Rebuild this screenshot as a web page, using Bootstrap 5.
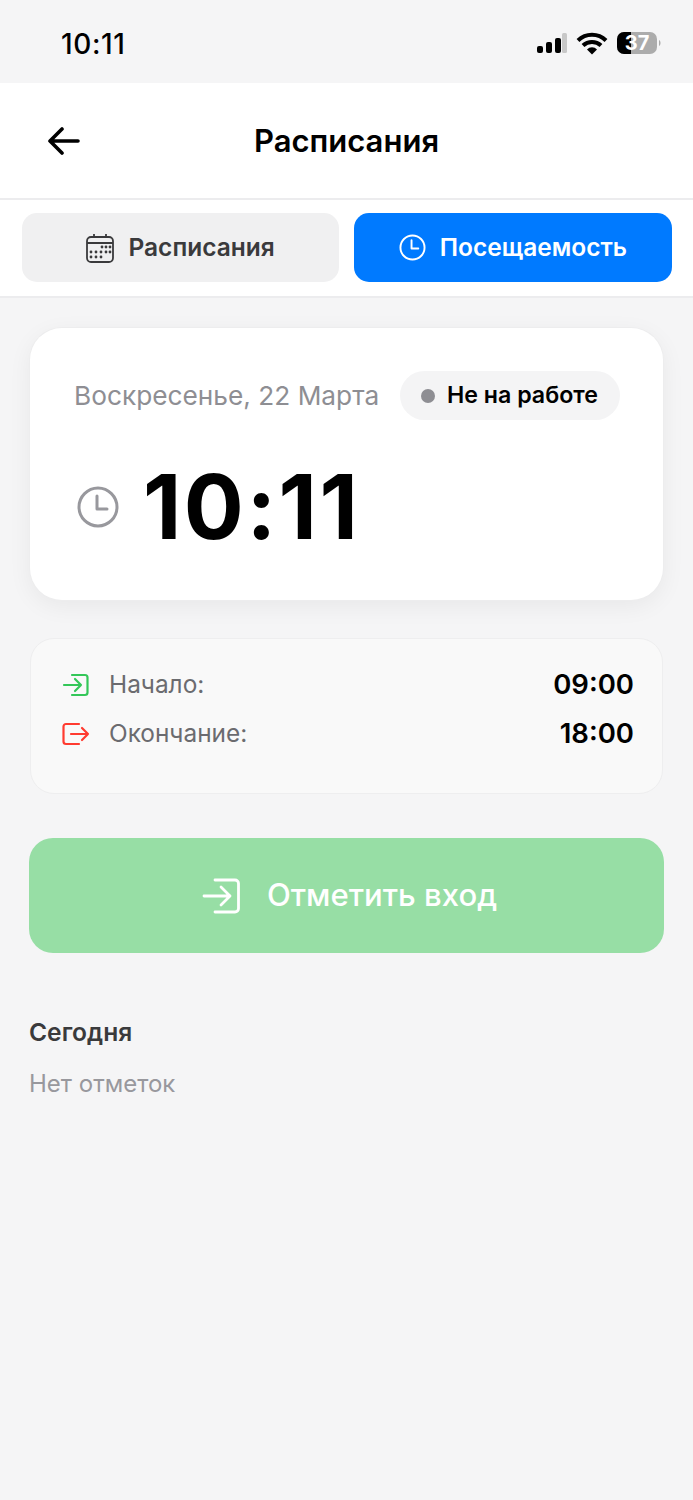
<!DOCTYPE html>
<html lang="ru">
<head>
  <meta charset="UTF-8" />
  <meta name="viewport" content="width=device-width, initial-scale=1.0" />
  <title>Расписания</title>
  <link href="https://cdn.jsdelivr.net/npm/bootstrap@5.3.3/dist/css/bootstrap.min.css" rel="stylesheet">
  <style>
    body {
      background-color: #f5f5f6;
      font-family: Inter, "Noto Sans", sans-serif;
      min-height: 1500px;
    }
    .status-bar { height: 83px; padding: 0 31px 0 61px; }
    .status-time { font-size: 28px; font-weight: 500; color: #000; margin-top: 5px; letter-spacing: 0.6px; }
    .status-icons { margin-top: 5px; }
    .top-bar { height: 117px; background: #fff; border-bottom: 2px solid #ececee; padding-left: 48px; }
    .top-title { font-size: 31px; font-weight: 600; color: #000; left: 0; right: 0; margin-top: 2px; }
    .tab-bar { background: #fff; height: 98px; padding: 13px 21.5px 0 22px; border-bottom: 2px solid #ececee; gap: 15px; }
    .tab-btn {
      flex: 1 1 0; height: 69px; border-radius: 15px; border: 0;
      font-size: 24.5px; font-weight: 600; gap: 14px;
    }
    .tab-off { background: #f0f0f1; color: #3a3a3c; }
    .tab-on { background: #007aff; color: #fff; }
    .page-body { padding: 30px 30px 0 30px; }
    .clock-card {
      height: 272px; border-radius: 32px; background: #fff; border: 0;
      box-shadow: 0 0 0 1px #ededee, 0 6px 24px rgba(0,0,0,0.06); padding: 43px 43px 0 44px;
    }
    .date-text { font-size: 26.250px; color: #8e8e93; }
    .state-pill {
      height: 49px; border-radius: 25px; background: #f4f4f5; padding: 0 22px 0 21px;
      font-size: 23.200px; font-weight: 600; color: #000; gap: 12px;
    }
    .state-dot { width: 14px; height: 14px; border-radius: 50%; background: #8e8e93; }
    .clock-row { margin-top: 42px; gap: 24px; padding-left: 3px; }
    .clock-time { font-size: 89px; font-weight: 700; color: #000; line-height: 1; letter-spacing: 2.500px; }
    .hours-card {
      margin-top: 38px; height: 156px; border-radius: 24px; background: #f9f9f9;
      border: 1px solid #eeeeef; padding: 21px 28px 0 31px;
    }
    .hours-row { height: 49px; }
    .hours-label { font-size: 24.400px; color: #6b6b6f; margin-left: 19px; }
    .hours-value { font-size: 27.500px; font-weight: 600; color: #000; }
    .checkin-btn {
      margin: 44px 0 0 -1px; width: 635px; height: 115px; border: 0; border-radius: 24px;
      background: #97dea5; color: #fff; font-size: 31.100px; font-weight: 500; gap: 27px; padding-left: 12px;
    }
    .today-title { margin-top: 63px; font-size: 24.600px; font-weight: 600; color: #3a3a3c; line-height: 32px; margin-left: -1px; }
    .today-empty { margin-top: 20px; font-size: 24px; color: #98989d; line-height: 32px; margin-left: -1px; }
  </style>
</head>
<body>

<!-- Status bar -->
<div class="status-bar d-flex align-items-center justify-content-between">
  <div class="status-time">10:11</div>
  <svg class="status-icons" width="126" height="24" viewBox="0 0 126 24">
    <rect x="1" y="14" width="6" height="7" rx="2" fill="#000"/>
    <rect x="10" y="10" width="6" height="11" rx="2" fill="#000"/>
    <rect x="19" y="6" width="6" height="15" rx="2" fill="#000"/>
    <rect x="26" y="1" width="5" height="20" rx="1.5" fill="#c8c8c8"/>
    <path d="M42 8.5a20 20 0 0 1 28 0" fill="none" stroke="#000" stroke-width="4"/>
    <path d="M47 13.5a13 13 0 0 1 18 0" fill="none" stroke="#000" stroke-width="4"/>
    <path d="M51 17.5a7 7 0 0 1 10 -0.1l-5 5.1z" fill="#000"/>
    <rect x="81" y="0" width="40" height="22" rx="7" fill="#acacac"/>
    <path d="M88 0h7v22h-7a7 7 0 0 1 -7 -7v-8a7 7 0 0 1 7 -7z" fill="#000"/>
    <path d="M123 8c2 1 2 5 0 6z" fill="#acacac"/>
    <text x="101" y="18" text-anchor="middle" font-family="Inter" font-size="20" font-weight="700" fill="#fff">37</text>
  </svg>
</div>

<!-- Header -->
<div class="top-bar d-flex align-items-center position-relative">
  <svg width="32" height="30" viewBox="0 0 32 30" fill="none" stroke="#000" stroke-width="3.6" stroke-linecap="round" stroke-linejoin="round">
    <path d="M30 15H3M14 3 2 15l12 12"/>
  </svg>
  <div class="top-title position-absolute text-center">Расписания</div>
</div>

<!-- Tabs -->
<div class="tab-bar d-flex">
  <button class="tab-btn tab-off d-flex align-items-center justify-content-center">
    <svg width="28" height="30" viewBox="0 0 28 30" fill="none" stroke="#3a3a3c" stroke-width="1.8">
      <rect x="1" y="4" width="26" height="25" rx="4"/>
      <path d="M1 10h26M8 1v4M20 1v4"/>
      <g fill="#3a3a3c" stroke="none">
        <circle cx="16" cy="14" r="1.4"/><circle cx="20" cy="14" r="1.4"/><circle cx="24" cy="14" r="1.4"/>
        <circle cx="5" cy="19" r="1.4"/><circle cx="10" cy="19" r="1.4"/><circle cx="15" cy="19" r="1.4"/><circle cx="20" cy="19" r="1.4"/><circle cx="24" cy="19" r="1.4"/>
        <circle cx="5" cy="24" r="1.4"/><circle cx="10" cy="24" r="1.4"/><circle cx="15" cy="24" r="1.4"/>
      </g>
    </svg>
    Расписания
  </button>
  <button class="tab-btn tab-on d-flex align-items-center justify-content-center">
    <svg width="27" height="27" viewBox="0 0 28 28" fill="none" stroke="#fff" stroke-width="2" stroke-linecap="round" stroke-linejoin="round">
      <circle cx="14" cy="14" r="12.5"/><path d="M13 6.5V15h7"/>
    </svg>
    Посещаемость
  </button>
</div>

<div class="page-body">
  <!-- Clock card -->
  <div class="card clock-card">
    <div class="d-flex align-items-center justify-content-between">
      <div class="date-text">Воскресенье, 22 Марта</div>
      <div class="state-pill d-flex align-items-center"><span class="state-dot"></span>Не на работе</div>
    </div>
    <div class="clock-row d-flex align-items-center">
      <svg width="42" height="42" viewBox="0 0 42 42" fill="none" stroke="#98989d" stroke-width="3" stroke-linecap="round" stroke-linejoin="round">
        <circle cx="21" cy="21" r="19"/><path d="M20 10v13h10"/>
      </svg>
      <div class="clock-time">10:11</div>
    </div>
  </div>

  <!-- Working hours -->
  <div class="hours-card">
    <div class="hours-row d-flex align-items-center">
      <svg width="28" height="24" viewBox="0 0 28 24" fill="none" stroke="#34c759" stroke-width="2.200" stroke-linecap="round" stroke-linejoin="round">
        <path d="M10 2h13a2.500 2.500 0 0 1 2.500 2.500v15a2.500 2.500 0 0 1 -2.500 2.500H10M2 12h17M13 6l6 6-6 6"/>
      </svg>
      <span class="hours-label">Начало:</span>
      <span class="hours-value ms-auto">09:00</span>
    </div>
    <div class="hours-row d-flex align-items-center">
      <svg width="28" height="24" viewBox="0 0 28 24" fill="none" stroke="#ff3b30" stroke-width="2.200" stroke-linecap="round" stroke-linejoin="round">
        <path d="M17 2H4a2.500 2.500 0 0 0 -2.500 2.500v15A2.500 2.500 0 0 0 4 22h13M9 12h17M20 6l6 6-6 6"/>
      </svg>
      <span class="hours-label">Окончание:</span>
      <span class="hours-value ms-auto">18:00</span>
    </div>
  </div>

  <button class="checkin-btn d-flex align-items-center justify-content-center">
    <svg width="38" height="36" viewBox="0 0 38 36" fill="none" stroke="#fff" stroke-width="2.800" stroke-linecap="round" stroke-linejoin="round">
      <path d="M13 2h20a3.500 3.500 0 0 1 3.500 3.500v25a3.500 3.500 0 0 1 -3.500 3.500H13M2 18h26M19 9l9 9-9 9"/>
    </svg>
    Отметить вход
  </button>

  <div class="today-title">Сегодня</div>
  <div class="today-empty">Нет отметок</div>
</div>

</body>
</html>
